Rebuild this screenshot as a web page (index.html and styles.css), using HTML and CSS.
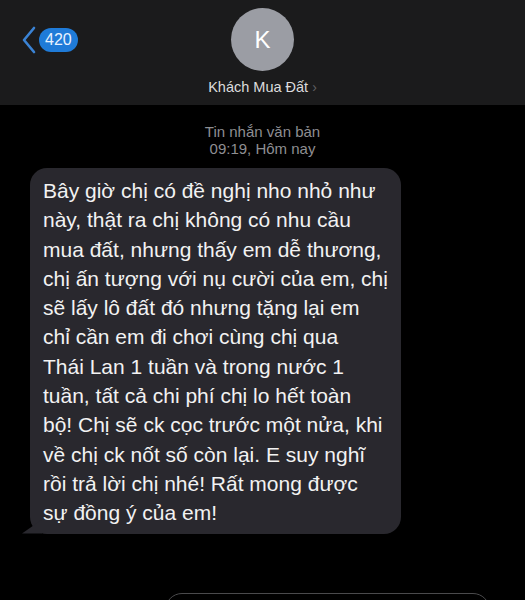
FILE: index.html
```html
<!DOCTYPE html>
<html lang="vi">
<head>
<meta charset="utf-8">
<link rel="stylesheet" href="styles.css">
</head>
<body>
<div class="screen">
  <header class="header">
    <div class="back">
      <svg class="chev" width="16" height="28" viewBox="0 0 16 28"><path d="M13 2 L3 14 L13 26" fill="none" stroke="#3b83d4" stroke-width="2.6" stroke-linecap="round" stroke-linejoin="round"/></svg>
      <span class="badge">420</span>
    </div>
    <div class="contact">
      <div class="avatar">K</div>
      <div class="name">Khách Mua Đất <span class="arrow">›</span></div>
    </div>
  </header>
  <div class="meta">
    <div>Tin nhắn văn bản</div>
    <div>09:19, Hôm nay</div>
  </div>
  <div class="thread">
    <div class="bubble">Bây giờ chị có đề nghị nho nhỏ như<br>này, thật ra chị không có nhu cầu<br>mua đất, nhưng thấy em dễ thương,<br>chị ấn tượng với nụ cười của em, chị<br>sẽ lấy lô đất đó nhưng tặng lại em<br>chỉ cần em đi chơi cùng chị qua<br>Thái Lan 1 tuần và trong nước 1<br>tuần, tất cả chi phí chị lo hết toàn<br>bộ! Chị sẽ ck cọc trước một nửa, khi<br>về chị ck nốt số còn lại. E suy nghĩ<br>rồi trả lời chị nhé! Rất mong được<br>sự đồng ý của em!</div>
  </div>
  <div class="composer"></div>
</div>
</body>
</html>
```
FILE: styles.css
```css
* { box-sizing: border-box; }
html, body { margin: 0; padding: 0; background: #000; }
body { font-family: "Liberation Sans", Arial, sans-serif; width: 525px; height: 600px; overflow: hidden; }
.screen { display: flex; flex-direction: column; height: 600px; }
.screen > * { flex-shrink: 0; }
.header {
  position: relative;
  height: 105px;
  background: #1b1b1c;
  display: flex;
  justify-content: center;
}
.back {
  position: absolute;
  left: 21px;
  top: 26px;
  display: flex;
  align-items: center;
  gap: 2px;
}
.badge {
  background: #1f7bd8;
  color: #e8f2ff;
  font-size: 16px;
  line-height: 24px;
  height: 24px;
  padding: 0 6px;
  border-radius: 12px;
}
.contact { display: flex; flex-direction: column; align-items: center; padding-top: 8px; }
.avatar {
  width: 63px; height: 63px; border-radius: 50%;
  background: #9b9da4;
  color: #fff;
  font-size: 24px;
  display: flex; align-items: center; justify-content: center;
}
.name { margin-top: 7px; color: #dcdcdc; font-size: 14.5px; line-height: 18px; }
.arrow { color: #5f5f62; font-size: 14px; }
.meta {
  margin-top: 18px;
  text-align: center;
  color: #8e8e92;
  font-size: 15px;
  line-height: 17px;
}
.thread { padding: 11px 0 0 30px; }
.bubble {
  position: relative;
  width: 371px;
  background: #29282e;
  color: #f2f2f2;
  border-radius: 17px;
  padding: 8px 10px 6px 13px;
  font-size: 21px;
  line-height: 29.3px;
  white-space: nowrap;
}
.bubble::before {
  content: "";
  position: absolute;
  left: -8px;
  bottom: 0;
  width: 20px;
  height: 14px;
  background: #29282e;
  clip-path: polygon(0 100%, 100% 0, 100% 100%);
}
.composer {
  margin: 59px 0 0 165px;
  width: 325px;
  height: 34px;
  border: 1px solid #4a4a4c;
  border-radius: 17px;
}
```
